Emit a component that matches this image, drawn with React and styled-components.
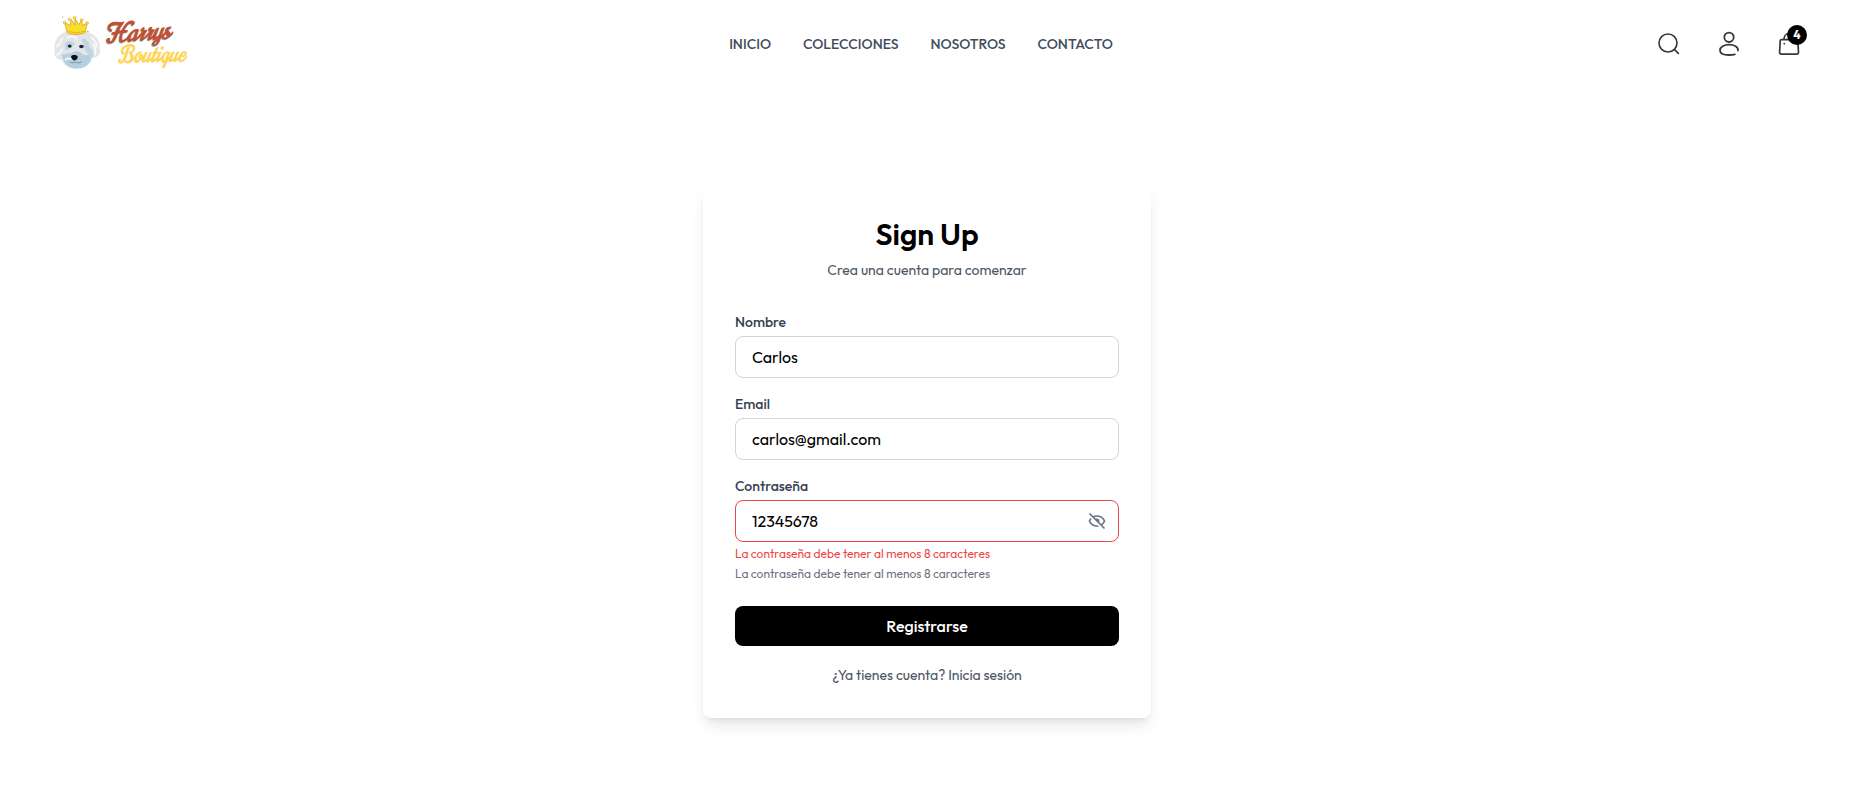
import React from "react";
import styled, { createGlobalStyle } from "styled-components";
import { BiHide } from "react-icons/bi";

const GlobalStyle = createGlobalStyle`
  *, *::before, *::after { box-sizing: border-box; }
  body {
    margin: 0;
    background: #fff;
    color: #000;
    font-family: Outfit, Lato, "Liberation Sans", sans-serif;
  }
`;

const Header = styled.header`
  display: flex;
  align-items: center;
  justify-content: space-between;
  height: 88px;
  padding: 0 65px 0 48px;
`;

const LogoArt = styled.svg`
  display: block;
  width: 137px;
  height: 64px;
  overflow: visible;
`;

const LogoWord = styled.text`
  font-family: Norican, "Dancing Script", "Liberation Serif", serif;
  font-style: italic;
  font-weight: 400;
  font-size: ${(p) => p.$size}px;
  fill: ${(p) => p.$color};
  stroke: ${(p) => p.$color};
  stroke-width: 0.8px;
`;

const Nav = styled.nav`
  display: flex;
  gap: 32px;
`;

const NavLink = styled.a`
  font-size: 14px;
  line-height: 20px;
  font-weight: 500;
  color: #414b5a;
`;

const Actions = styled.div`
  display: flex;
  gap: 36px;
`;

const Action = styled.div`
  position: relative;
  width: 24px;
  height: 24px;

  svg {
    display: block;
    overflow: visible;
  }
`;

const Badge = styled.span`
  position: absolute;
  left: 10px;
  top: -7px;
  width: 20px;
  height: 20px;
  border-radius: 50%;
  background: #000;
  color: #fff;
  font-size: 12px;
  font-weight: 700;
  line-height: 20px;
  text-align: center;
`;

const Main = styled.main`
  display: flex;
  justify-content: center;
  padding: 96px 12px 91px 0;
`;

const Card = styled.section`
  width: 448px;
  padding: 32px 32px 33px;
  border-radius: 8px;
  background: #fff;
  box-shadow: 0 10px 15px -3px rgba(0, 0, 0, 0.1), 0 4px 6px -4px rgba(0, 0, 0, 0.1);
`;

const Title = styled.h1`
  margin: 0 0 8px;
  font-size: 30px;
  line-height: 36px;
  font-weight: 600;
  text-align: center;
`;

const Note = styled.p`
  margin: 0;
  font-size: 14px;
  line-height: 20px;
  text-align: center;
  color: #4b5563;
`;

const Form = styled.form`
  display: flex;
  flex-direction: column;
  gap: 16px;
  margin: 32px 0 19px;
`;

const Field = styled.div`
  display: flex;
  flex-direction: column;
`;

const Label = styled.label`
  margin-bottom: 4px;
  font-size: 14px;
  line-height: 20px;
  font-weight: 500;
  color: #374151;
`;

const InputBox = styled.div`
  display: flex;
  align-items: center;
  height: 42px;
  padding: 0 11px 0 16px;
  border: 1px solid ${(p) => (p.$invalid ? "#ef4444" : "#d1d5db")};
  border-radius: 8px;
  color: #6b7280;
`;

const Input = styled.input`
  flex: 1;
  min-width: 0;
  padding: 0;
  border: 0;
  outline: 0;
  background: transparent;
  color: #000;
  font: inherit;
  font-size: 16px;
  line-height: 24px;
`;

const Message = styled.p`
  margin: 4px 0 0;
  font-size: 12px;
  line-height: 16px;
  color: ${(p) => (p.$error ? "#ef4444" : "#6b7280")};
`;

const Submit = styled.button`
  height: 40px;
  margin-top: 8px;
  border: 0;
  border-radius: 8px;
  background: #000;
  color: #fff;
  font: inherit;
  font-size: 16px;
  font-weight: 500;
`;

function Logo() {
  return (
    <LogoArt viewBox="0 0 137 64">
      <g transform="translate(0.7 -0.5)">
        <path d="M12 23C17 18 37 17 42 22C48 24 52 31 51 37C53 41 49 47 44 46C43 51 38 56 29 57C21 58 14 53 13 48C9 49 5 45 6 40C5 33 7 27 12 23Z" fill="#e3e5e7" />
        <path d="M13 42C17 45 19 40 23 42C26 39 31 39 34 43C38 45 41 42 42 45C43 51 37 57 29 57C20 58 14 52 13 42Z" fill="#b5cfe0" />
        <path d="M33 27C38 27 41 31 41 36C45 39 46 43 44 46C40 45 38 40 36 38M16 32C19 28 25 29 26 33C22 36 20 38 17 39Z" fill="#bdd5e4" />
        <path d="M8 35C11 33 12 30 13 27M8 43C11 43 12 41 13 38M43 26C46 29 48 31 48 35M45 33C47 37 47 40 46 43M19 26C22 24 26 25 28 27M17 48C20 46 22 48 24 47" fill="none" stroke="#f7f8f9" strokeWidth="2" strokeLinecap="round" />
        <ellipse cx="21" cy="34.6" rx="2" ry="1.7" fill="#20262d" />
        <ellipse cx="32.7" cy="35" rx="2.3" ry="1.8" fill="#20262d" />
        <path d="M22.5 44.5C23.5 43 27.5 43 28.8 44.5C29.5 47 27.5 48.8 25.7 49C23.5 48.5 22 46.6 22.5 44.5Z" fill="#090d12" />
        <path d="M21 50.5C23 51.8 25 51.5 26.3 50.3C28 51.6 31 51.8 33 50.4" fill="none" stroke="#748391" strokeWidth="0.8" />
        <path d="M18.5 21L15.8 11L21.5 14L22.5 8L26.5 13.5L26 6.5L30 13L33 8.5L33.7 14L38.5 11.5L36.5 21C32 23.5 23 23.7 18.5 21Z" fill="#f9df29" stroke="#d99a2b" strokeWidth="0.8" strokeLinejoin="round" />
        <g fill="#ffe747" stroke="#dba02d" strokeWidth="0.6">
          <circle cx="15.8" cy="11" r="1.3" />
          <circle cx="20.7" cy="8" r="1.2" />
          <circle cx="26" cy="6.5" r="1.4" />
          <circle cx="33" cy="8.5" r="1.3" />
          <circle cx="38.5" cy="11.5" r="1.3" />
        </g>
        <path d="M19 19.5C24 21.5 31 21.5 36.3 19.5" fill="none" stroke="#efb32c" strokeWidth="1.2" />
        <circle cx="14" cy="5.6" r="0.7" fill="#d78d65" />
        <circle cx="39.2" cy="20" r="0.7" fill="#d7855d" />
      </g>
      <g transform="rotate(-4 56 32)">
        <LogoWord x="57" y="31.6" $size={27} $color="#8ab5af" textLength="65" lengthAdjust="spacingAndGlyphs">Harrys</LogoWord>
        <LogoWord x="57.8" y="30.8" $size={27} $color="#c34f32" textLength="65" lengthAdjust="spacingAndGlyphs">Harrys</LogoWord>
      </g>
      <g transform="rotate(-1 70 51)">
        <LogoWord x="70" y="50.5" $size={24} $color="#ffd454" textLength="67" lengthAdjust="spacingAndGlyphs">Boutique</LogoWord>
      </g>
    </LogoArt>
  );
}

function SearchIcon() {
  return (
    <svg width="24" height="24" viewBox="0 0 24 24" fill="none" stroke="#373737" strokeWidth="1.6">
      <circle cx="11" cy="11" r="9" />
      <path d="M17.3 17.4L21.8 21.9" />
    </svg>
  );
}

function UserIcon() {
  return (
    <svg width="24" height="24" viewBox="0 0 24 24" fill="none" stroke="#373737" strokeWidth="1.8" strokeLinecap="round">
      <circle cx="12" cy="5.3" r="4.7" />
      <path d="M21 18.5C21.5 14.8 17 12.7 12 12.7C7 12.7 3 15 3 18.2C3 22 8 23 12 23C14.3 23 16.3 22.8 17.8 22.3" />
    </svg>
  );
}

function BagIcon() {
  return (
    <svg width="24" height="24" viewBox="0 0 24 24" fill="none" stroke="#373737" strokeWidth="1.7">
      <path d="M4.4 7.6H19.6Q20.7 7.6 20.8 8.7L21.5 20.3Q21.4 22.2 19.6 22.2H4.4Q2.6 22.2 2.6 20.3L3.2 8.7Q3.3 7.6 4.4 7.6Z" />
      <path d="M7 7.5C7 4 9 1.5 12 1.5C15 1.5 17 4 17 7.5" />
      <circle cx="7.3" cy="11.7" r="0.9" fill="#373737" stroke="none" />
    </svg>
  );
}

export default function App() {
  return (
    <>
      <GlobalStyle />
      <Header>
        <Logo />
        <Nav>
          <NavLink>INICIO</NavLink>
          <NavLink>COLECCIONES</NavLink>
          <NavLink>NOSOTROS</NavLink>
          <NavLink>CONTACTO</NavLink>
        </Nav>
        <Actions>
          <Action><SearchIcon /></Action>
          <Action><UserIcon /></Action>
          <Action><BagIcon /><Badge>4</Badge></Action>
        </Actions>
      </Header>
      <Main>
        <Card>
          <Title>Sign Up</Title>
          <Note>Crea una cuenta para comenzar</Note>
          <Form>
            <Field>
              <Label htmlFor="nombre">Nombre</Label>
              <InputBox><Input id="nombre" defaultValue="Carlos" /></InputBox>
            </Field>
            <Field>
              <Label htmlFor="email">Email</Label>
              <InputBox><Input id="email" defaultValue="carlos@gmail.com" /></InputBox>
            </Field>
            <Field>
              <Label htmlFor="clave">Contraseña</Label>
              <InputBox $invalid>
                <Input id="clave" defaultValue="12345678" />
                <BiHide size={20} />
              </InputBox>
              <Message $error>La contraseña debe tener al menos 8 caracteres</Message>
              <Message>La contraseña debe tener al menos 8 caracteres</Message>
            </Field>
            <Submit type="button">Registrarse</Submit>
          </Form>
          <Note>¿Ya tienes cuenta? Inicia sesión</Note>
        </Card>
      </Main>
    </>
  );
}
